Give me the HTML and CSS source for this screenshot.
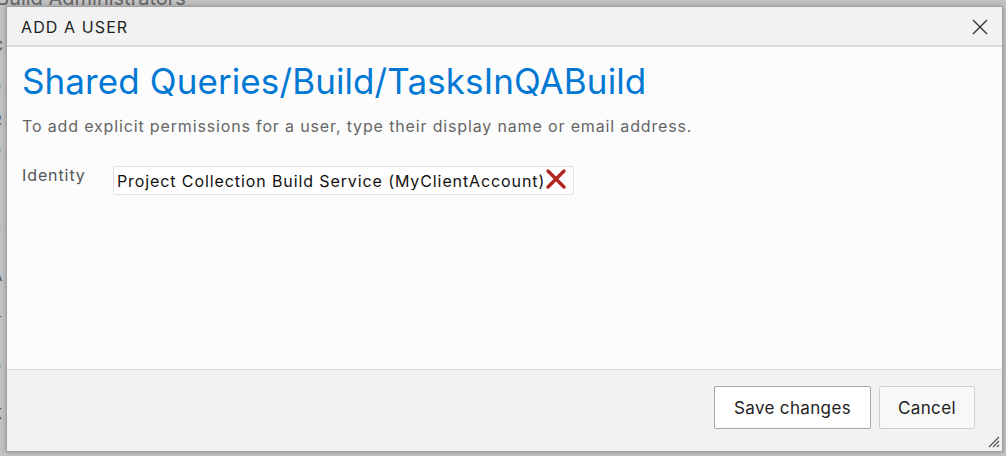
FILE: index.html
```html
<!DOCTYPE html>
<html>
<head>
<meta charset="utf-8">
<link rel="stylesheet" href="styles.css">
</head>
<body>
<div class="backdrop">
  <div class="bg-title">Build Administrators</div>
  <div class="bg-letters">
    <span class="l1">C</span><span class="l2">o</span><span class="l3">R</span><span class="l4">o</span><span class="l5">e</span><span class="l6">A</span><span class="l7">T</span><span class="l8">o</span><span class="l9">K</span>
  </div>
</div>
<div class="dialog">
  <div class="dlg-header">
    <span class="dlg-title">ADD A USER</span>
    <svg class="close" width="16" height="16" viewBox="0 0 16 16"><path d="M1 1L15 15M15 1L1 15" stroke="#333" stroke-width="1.4" fill="none"/></svg>
  </div>
  <div class="dlg-body">
    <h1 class="heading">Shared Queries/Build/TasksInQABuild</h1>
    <p class="hint">To add explicit permissions for a user, type their display name or email address.</p>
    <div class="field">
      <label class="field-label">Identity</label>
      <div class="identity-box">
        <span class="identity-text">Project Collection Build Service (MyClientAccount)</span>
        <svg class="remove" width="22" height="22" viewBox="0 0 22 22"><path d="M3 3L19 19M19 3L3 19" stroke="#b3261e" stroke-width="3.4" stroke-linecap="round" fill="none"/></svg>
      </div>
    </div>
  </div>
  <div class="dlg-footer">
    <button class="btn btn-primary">Save changes</button>
    <button class="btn btn-cancel">Cancel</button>
    <svg class="grip" width="14" height="14" viewBox="0 0 14 14"><path d="M13 3L3 13M13 7L7 13M13 11L11 13" stroke="#555" stroke-width="1.2" fill="none"/></svg>
  </div>
</div>
</body>
</html>
```
FILE: styles.css
```css
* { box-sizing: border-box; }
html, body { margin: 0; padding: 0; }
body {
  width: 1006px;
  height: 456px;
  overflow: hidden;
  background: #c4c4c4;
  font-family: Inter, "Liberation Sans", sans-serif;
  position: relative;
}
.backdrop {
  position: absolute;
  inset: 0;
  color: #555;
}
.bg-title {
  position: absolute;
  left: -4px;
  top: -14px;
  font-size: 20px;
  color: #666;
}
.bg-letters {
  position: absolute;
  left: -8px;
  top: 0;
  font-size: 15px;
  color: #555;
}
.bg-letters span { position: absolute; left: 0; }
.l1 { top: 36px; }
.l2 { top: 76px; }
.l3 { top: 110px; }
.l4 { top: 140px; }
.l5 { top: 220px; }
.l6 { top: 266px; }
.l7 { top: 312px; }
.l8 { top: 356px; }
.l9 { top: 404px; }
.dialog {
  position: absolute;
  left: 6px;
  top: 6px;
  width: 997px;
  height: 446px;
  border: 1px solid #a0a0a0;
  background: #fcfcfc;
  display: flex;
  flex-direction: column;
  box-shadow: 0 0 6px rgba(0,0,0,0.25);
}
.dlg-header {
  height: 40px;
  background: #f2f2f2;
  border-bottom: 2px solid #dcdcdc;
  display: flex;
  align-items: center;
  justify-content: space-between;
  padding: 2px 14px 0 14px;
}
.dlg-title {
  font-size: 16px;
  color: #222;
  letter-spacing: 1.1px;
}
.close { margin-top: 0; }
.dlg-body {
  flex: 1;
  padding: 0 15px;
}
.heading {
  margin: 14px 0 0 0;
  font-weight: 400;
  font-size: 35px;
  line-height: 40px;
  color: #0078d4;
  letter-spacing: 0.1px;
}
.hint {
  margin: 15px 0 0 0;
  font-size: 16px;
  line-height: 20px;
  color: #666;
  letter-spacing: 0.85px;
}
.field {
  display: flex;
  align-items: flex-start;
  margin-top: 30px;
}
.field-label {
  width: 91px;
  font-size: 16px;
  line-height: 20px;
  color: #555;
  margin-top: -1px;
  letter-spacing: 0.9px;
}
.identity-box {
  display: flex;
  align-items: center;
  height: 29px;
  border: 1px solid #e0e0e0;
  border-radius: 2px;
  background: #fff;
  padding: 0 6px 0 3px;
}
.identity-text {
  font-size: 16px;
  color: #111;
  letter-spacing: 0.9px;
}
.remove { margin-top: -3px; }
.dlg-footer {
  height: 82px;
  background: #f2f2f2;
  border-top: 1px solid #dcdcdc;
  display: flex;
  justify-content: flex-end;
  align-items: flex-start;
  padding: 16px 27px 0 0;
  gap: 8px;
  position: relative;
}
.btn {
  font-family: Inter, "Liberation Sans", sans-serif;
  font-size: 17px;
  color: #222;
  height: 43px;
  border-radius: 2px;
  padding: 0;
  letter-spacing: 0.35px;
}
.btn-primary {
  width: 157px;
  background: #fff;
  border: 1px solid #a6a6a6;
}
.btn-cancel {
  width: 96px;
  background: #f8f8f8;
  border: 1px solid #cfcfcf;
}
.grip {
  position: absolute;
  right: 2px;
  bottom: 3px;
}
```
